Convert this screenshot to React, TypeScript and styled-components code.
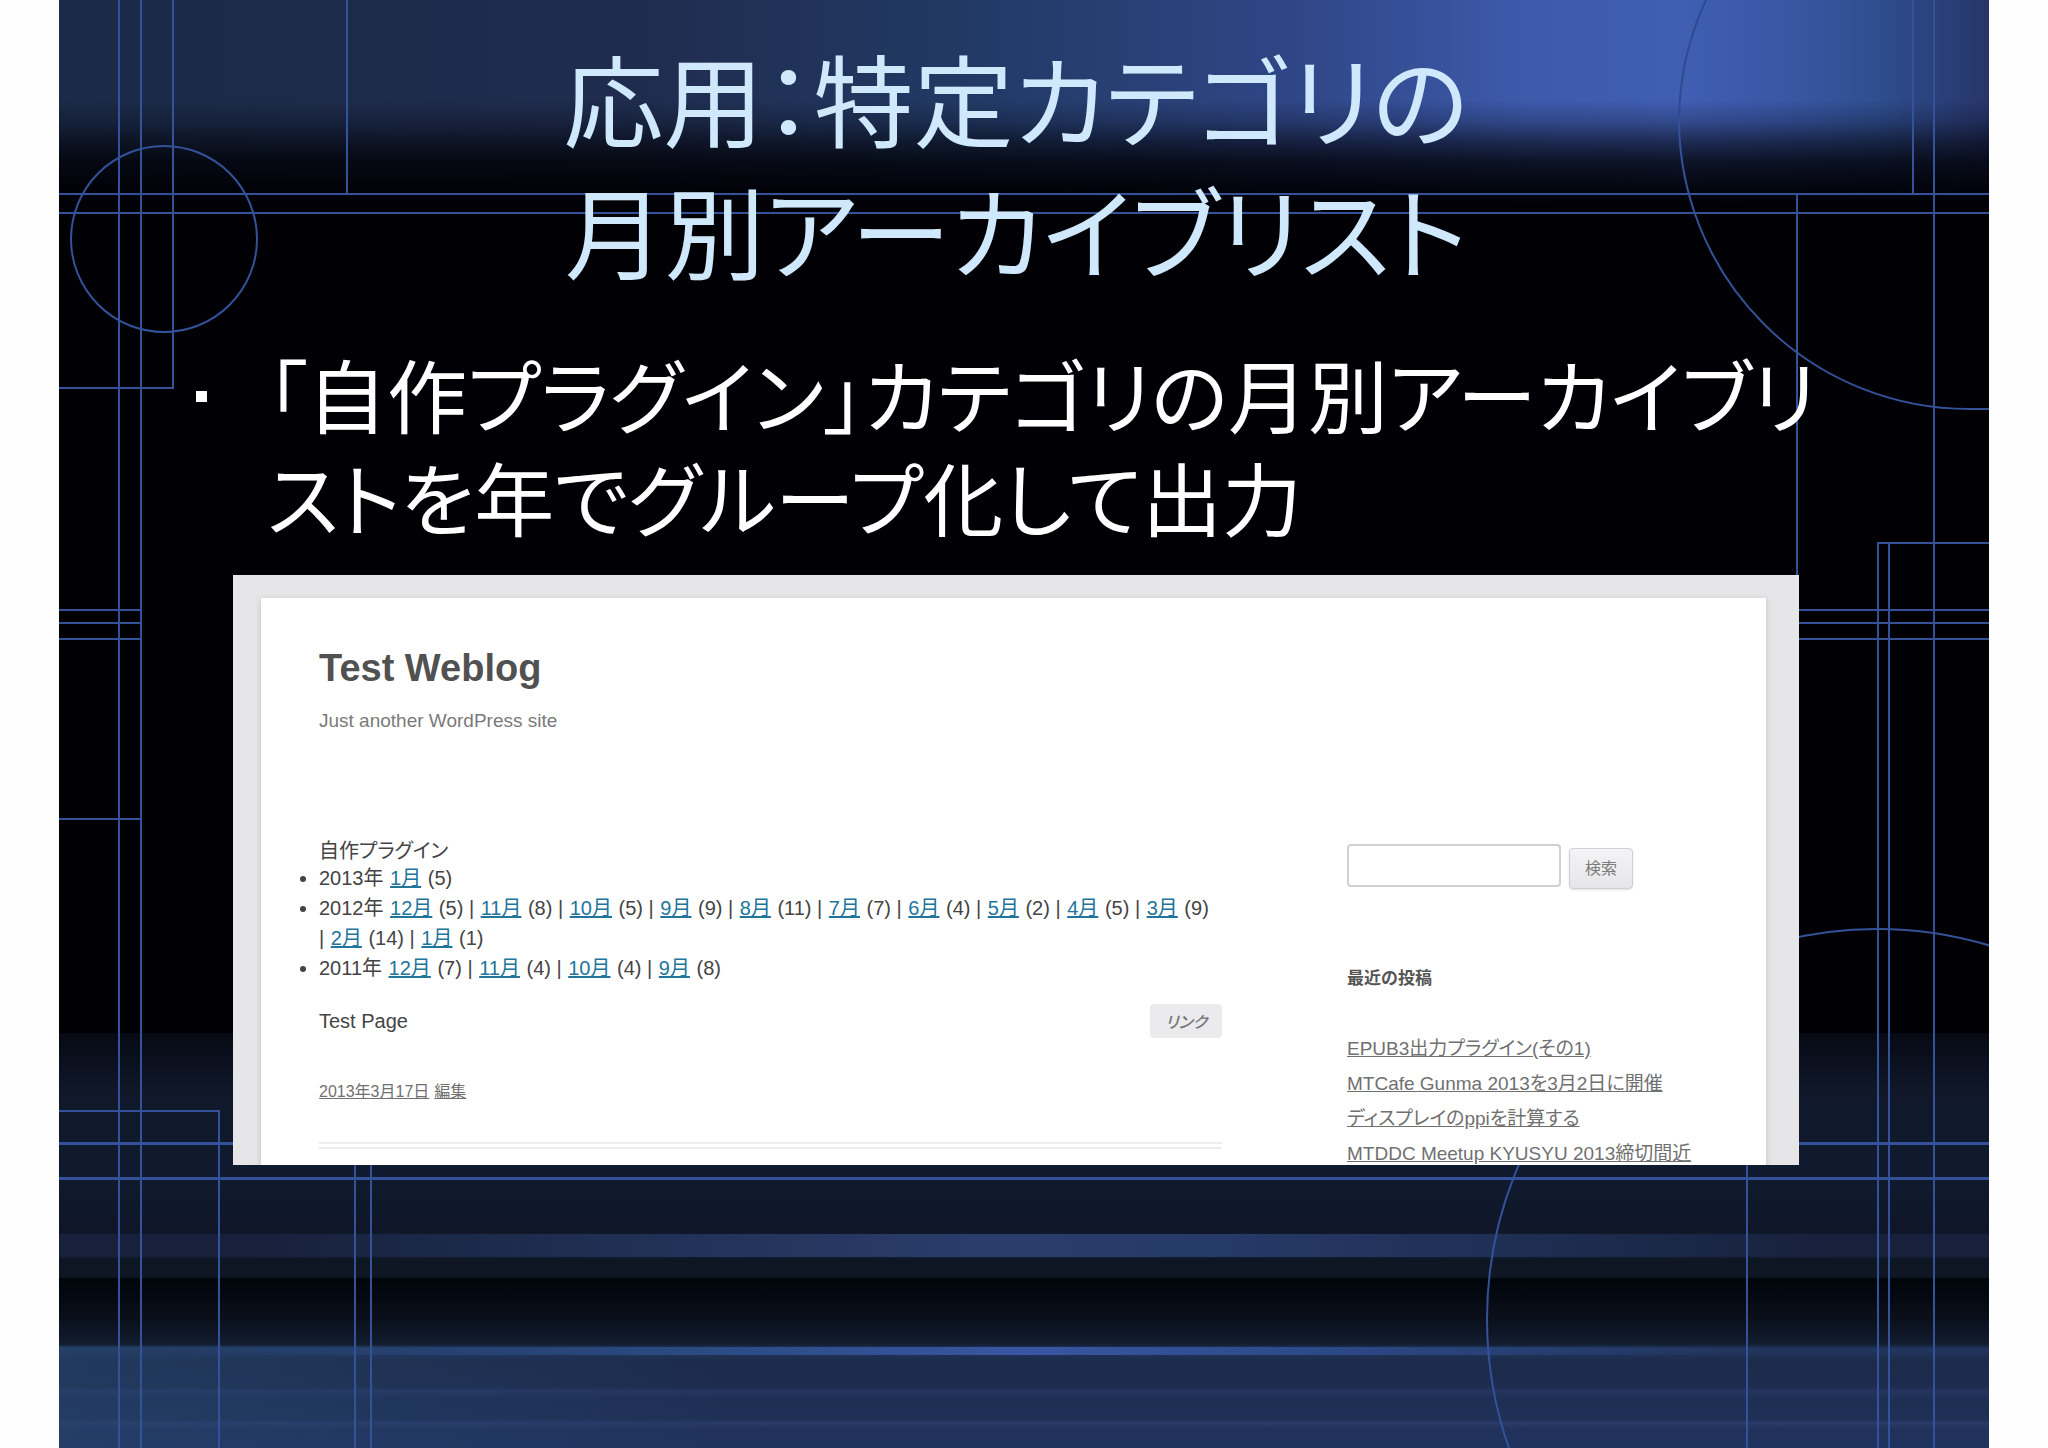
import styled, { createGlobalStyle } from "styled-components";

const cjk = `"Noto Sans CJK JP", sans-serif`;

const GlobalStyle = createGlobalStyle`
  * { box-sizing: border-box; }
  body { margin: 0; background: #fefefe; }
`;

const Stage = styled.main`
  padding: 0 59px;
`;

const Slide = styled.section`
  position: relative;
  min-height: 100vh;
  padding: 31px 190px 0 174px;
  font-family: ${cjk};
  background-color: #000005;
  background-image:
    linear-gradient(to bottom, transparent 0, transparent 100px, rgba(0, 0, 5, 0.22) 122px, rgba(0, 0, 5, 0.55) 142px, rgba(0, 0, 5, 0.8) 162px, rgba(0, 0, 5, 0.94) 188px, #000005 210px),
    linear-gradient(to right, #1b2a48 0, #1f2c4e 30%, #223a66 48%, #2f4686 64%, #3d5aab 76%, #405eb2 84%, #3a57a6 89%, #2f4f90 94%, #27356a 100%),
    linear-gradient(to right, transparent 10%, #2a3d6b 48%, #263a68 60%, transparent 92%),
    linear-gradient(to right, transparent 5%, #2b4c85 35%, #3a55a2 50%, #2c4a88 65%, transparent 88%),
    linear-gradient(to right, rgba(42, 78, 120, 0.4) 0, transparent 35%),
    linear-gradient(to bottom, #070a14 0, #10182a 60px, #101a2e 140px, #0f1628 200px, #17213c 202px, #17213c 223px, #0d1622 226px, #0d1622 244px, #01050b 246px, #0a0f1a 285px, #121d30 311px, #22365e 316px, #1c2b4b 328px, #1d2c4e 354px, #25355f 358px, #1e2f54 366px, #1f3056 386px, #283a66 390px, #20325b 397px, #20335f 415px);
  background-repeat: no-repeat;
  background-size: 100% 210px, 100% 210px, 100% 23px, 100% 8px, 100% 102px, 100% 415px;
  background-position: 0 0, 0 0, 0 1234px, 0 1347px, 0 1346px, 0 1033px;
`;

const Artwork = styled.svg`
  position: absolute;
  inset: 0;
  width: 100%;
  height: 100%;
  fill: none;
  stroke: #34529a;
  stroke-width: 2px;
`;

const Content = styled.div`
  position: relative;
`;

const Title = styled.h1`
  margin: 0 0 46px;
  text-align: center;
  font-size: 100px;
  line-height: 132px;
  font-weight: 400;
  font-feature-settings: "palt";
  color: #d0e8fc;
`;

const Points = styled.ul`
  margin: 0 -60px 28px -40px;
  padding: 0;
  list-style: none;
`;

const Point = styled.li`
  display: flex;
  gap: 60px;
  font-size: 80px;
  line-height: 103px;
  font-weight: 400;
  font-feature-settings: "palt";
  color: #ffffff;
  white-space: nowrap;

  &::before {
    content: "";
    flex: none;
    width: 11px;
    height: 11px;
    margin-top: 50px;
    margin-left: 3px;
    background: #ffffff;
  }
`;

const Capture = styled.div`
  padding: 23px 33px 0 28px;
  overflow: hidden;
  background: #e6e6e8;
  font-family: "Liberation Sans", ${cjk};
  font-size: 20px;
  color: #444444;
`;

const Page = styled.div`
  padding: 48px 58px 0;
  background: #ffffff;
  box-shadow: 0 2px 6px rgba(100, 100, 100, 0.3);
`;

const SiteTitle = styled.h2`
  margin: 0 0 19px;
  font-size: 38px;
  line-height: 44px;
  color: #515151;
`;

const Tagline = styled.p`
  margin: 0 0 106px;
  font-size: 19px;
  line-height: 24px;
  color: #7a7a7a;
`;

const Columns = styled.div`
  display: flex;
  gap: 125px;
`;

const Primary = styled.div`
  flex: 903 1 0;
  min-width: 0;
`;

const Sidebar = styled.aside`
  flex: 361 1 0;
  min-width: 0;
  padding-top: 5px;
`;

const Category = styled.div`
  line-height: 24px;
  font-size: 20px;
  font-feature-settings: "palt";
`;

const Years = styled.ul`
  margin: 0 0 21px;
  padding: 0;
  line-height: 30px;
`;

const MonthItem = styled.span`
  white-space: nowrap;
`;

const MonthLink = styled.a`
  margin: 0 1px;
  color: #21759b;
`;

const Entry = styled.div`
  display: flex;
  align-items: center;
  justify-content: space-between;
  height: 34px;
  margin-bottom: 42px;
`;

const Badge = styled.button`
  height: 34px;
  padding: 0 15px;
  border: 0;
  border-radius: 4px;
  background: #ebebed;
  font: italic 500 16px/34px ${cjk};
  font-feature-settings: "palt";
  color: #757575;
`;

const Meta = styled.div`
  display: flex;
  gap: 5px;
  font-size: 16px;
  line-height: 24px;
`;

const GreyLink = styled.a`
  color: #707070;
`;

const Rule = styled.hr`
  height: 7px;
  margin: 38px 0 15px;
  border: solid #ededef;
  border-width: 2px 0;
`;

const Search = styled.form`
  display: flex;
  align-items: flex-start;
  gap: 8px;
  margin: 0 0 78px;
`;

const SearchBox = styled.input`
  width: 214px;
  height: 43px;
  padding: 8px;
  border: 2px solid #d2d0d4;
  border-radius: 4px;
  background: #ffffff;
  font: inherit;
`;

const SearchButton = styled.button`
  width: 64px;
  height: 41px;
  margin-top: 4px;
  padding: 0 0 4px;
  border: 1px solid #d0d0d4;
  border-radius: 4px;
  background: linear-gradient(#f4f4f6, #e6e6e8);
  box-shadow: 0 1px 2px rgba(64, 64, 64, 0.15);
  font: 400 16px/24px ${cjk};
  color: #7c7c7c;
`;

const WidgetTitle = styled.h3`
  margin: 0 0 47px;
  font-size: 17px;
  line-height: 24px;
  color: #555555;
`;

const Posts = styled.ul`
  display: flex;
  flex-direction: column;
  gap: 13px;
  margin: 0;
  padding: 0;
  list-style: none;
  font-size: 19px;
  line-height: 22px;
  font-feature-settings: "palt";
  white-space: nowrap;
`;

type Month = [label: string, count: number];

const years: { year: string; months: Month[] }[] = [
  { year: "2013年", months: [["1月", 5]] },
  {
    year: "2012年",
    months: [
      ["12月", 5], ["11月", 8], ["10月", 5], ["9月", 9], ["8月", 11], ["7月", 7],
      ["6月", 4], ["5月", 2], ["4月", 5], ["3月", 9], ["2月", 14], ["1月", 1],
    ],
  },
  { year: "2011年", months: [["12月", 7], ["11月", 4], ["10月", 4], ["9月", 8]] },
];

const posts = [
  "EPUB3出力プラグイン(その1)",
  "MTCafe Gunma 2013を3月2日に開催",
  "ディスプレイのppiを計算する",
  "MTDDC Meetup KYUSYU 2013締切間近",
];

const GridArt = () => (
  <Artwork viewBox="0 0 1930 1448" preserveAspectRatio="none" aria-hidden="true">
    <g shapeRendering="crispEdges">
      <path d="M60 0V1448M82 0V1448M114 0V388H0M288 0V194M1854 0V194M1875 0V1448M1738 194V600" />
      <path d="M0 194H1930M0 213H1930" />
      <path d="M0 610H82M0 623H82M0 639H82M0 819H82" />
      <path d="M1740 610H1930M1740 623H1930M1740 639H1930" />
      <path d="M1819 1448V543H1930M1830 543V1448" />
      <path d="M0 1111H160V1448M296 1160V1448M312 1160V1448M1688 1160V1448" />
      <path d="M0 1143.5H1930M0 1178.5H1930" strokeWidth="3" />
    </g>
    <circle cx="105" cy="239" r="93" />
    <path d="M1647 0A290 290 0 0 0 1620 119" stroke="#2c4b92" />
    <path d="M1620 119A290 290 0 0 0 1910 409H1930" />
    <circle cx="1818" cy="1319" r="390" />
  </Artwork>
);

export default function App() {
  return (
    <Stage lang="ja">
      <GlobalStyle />
      <Slide>
        <GridArt />
        <Content>
          <Title>
            応用：特定カテゴリの
            <br />
            月別アーカイブリスト
          </Title>
          <Points>
            <Point>
              <span>
                「自作プラグイン」カテゴリの月別アーカイブリ
                <br />
                ストを年でグループ化して出力
              </span>
            </Point>
          </Points>
          <Capture>
            <Page>
              <SiteTitle>Test Weblog</SiteTitle>
              <Tagline>Just another WordPress site</Tagline>
              <Columns>
                <Primary>
                  <Category>自作プラグイン</Category>
                  <Years>
                    {years.map(({ year, months }) => (
                      <li key={year}>
                        <span>{year}</span>
                        {months.map(([label, count], i) => [
                          " ",
                          <MonthItem key={label}>
                            {i > 0 && "| "}
                            <MonthLink href="#">{label}</MonthLink>
                            {` (${count})`}
                          </MonthItem>,
                        ])}
                      </li>
                    ))}
                  </Years>
                  <Entry>
                    <span>Test Page</span>
                    <Badge type="button">リンク</Badge>
                  </Entry>
                  <Meta>
                    <GreyLink href="#">2013年3月17日</GreyLink>
                    <GreyLink href="#">編集</GreyLink>
                  </Meta>
                  <Rule />
                </Primary>
                <Sidebar>
                  <Search onSubmit={(e) => e.preventDefault()}>
                    <SearchBox type="text" aria-label="検索" />
                    <SearchButton type="submit">検索</SearchButton>
                  </Search>
                  <WidgetTitle>最近の投稿</WidgetTitle>
                  <Posts>
                    {posts.map((post) => (
                      <li key={post}>
                        <GreyLink href="#">{post}</GreyLink>
                      </li>
                    ))}
                  </Posts>
                </Sidebar>
              </Columns>
            </Page>
          </Capture>
        </Content>
      </Slide>
    </Stage>
  );
}
